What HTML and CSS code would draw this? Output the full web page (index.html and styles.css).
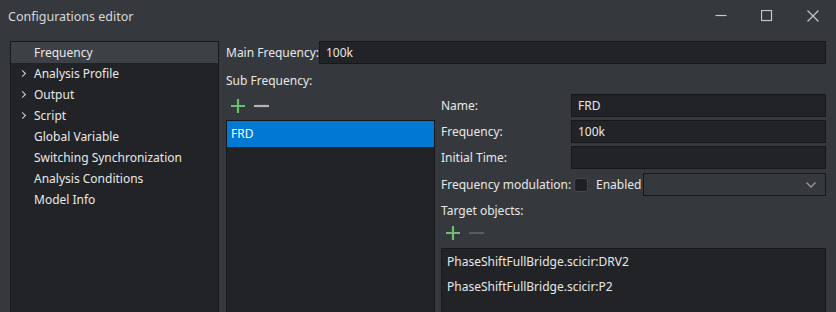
FILE: index.html
```html
<!DOCTYPE html>
<html lang="en">
<head>
  <meta charset="UTF-8" />
  <title>Configurations editor</title>
  <link rel="stylesheet" href="styles.css">
</head>
<body>
  <div class="window">
    <div class="titlebar">
      <span class="title">Configurations editor</span>
      <div class="win-buttons">
        <span class="win-btn"><svg width="12" height="12" viewBox="0 0 12 12"><path d="M0.5 5.5h11" stroke="#c8c8c8" stroke-width="1.2"/></svg></span>
        <span class="win-btn"><svg width="12" height="12" viewBox="0 0 12 12"><rect x="0.5" y="0.5" width="10" height="10" fill="none" stroke="#c8c8c8" stroke-width="1.2"/></svg></span>
        <span class="win-btn"><svg width="12" height="12" viewBox="0 0 12 12"><path d="M0.5 0.5l11 11M11.5 0.5l-11 11" stroke="#c8c8c8" stroke-width="1.2"/></svg></span>
      </div>
    </div>

    <div class="main">
      <ul class="tree">
        <li class="selected">Frequency</li>
        <li class="branch">Analysis Profile</li>
        <li class="branch">Output</li>
        <li class="branch">Script</li>
        <li>Global Variable</li>
        <li>Switching Synchronization</li>
        <li>Analysis Conditions</li>
        <li>Model Info</li>
      </ul>

      <div class="content">
        <div class="main-freq">
          <label>Main Frequency:</label>
          <div class="field">100k</div>
        </div>
        <div class="sub-label">Sub Frequency:</div>

        <div class="split">
          <div class="sub-col">
            <div class="tools">
              <span class="tool add"><svg width="16" height="16" viewBox="0 0 16 16"><path d="M8 1v14M1 8h14" stroke="#6cbf6a" stroke-width="2.2"/></svg></span>
              <span class="tool"><svg width="16" height="16" viewBox="0 0 16 16"><path d="M1 8h15" stroke="#b4b4b4" stroke-width="2.2"/></svg></span>
            </div>
            <div class="list sub-list">
              <div class="item active">FRD</div>
            </div>
          </div>

          <div class="form">
            <div class="grid">
              <label>Name:</label>
              <div class="field">FRD</div>
              <label>Frequency:</label>
              <div class="field">100k</div>
              <label>Initial Time:</label>
              <div class="field"></div>
            </div>
            <div class="mod-row">
              <label>Frequency modulation:</label>
              <span class="checkbox"></span>
              <span class="enabled">Enabled</span>
              <div class="field combo">
                <svg width="10" height="6" viewBox="0 0 10 6"><path d="M0.5 0.5l4.5 4.5 4.5-4.5" fill="none" stroke="#9a9a9a" stroke-width="1.3"/></svg>
              </div>
            </div>
            <div class="target-label">Target objects:</div>
            <div class="tools target-tools">
              <span class="tool add"><svg width="16" height="16" viewBox="0 0 16 16"><path d="M8 1v14M1 8h14" stroke="#6cbf6a" stroke-width="2.2"/></svg></span>
              <span class="tool"><svg width="16" height="16" viewBox="0 0 16 16"><path d="M1 8h15" stroke="#585b60" stroke-width="2.2"/></svg></span>
            </div>
            <div class="list target-list">
              <div class="item">PhaseShiftFullBridge.scicir:DRV2</div>
              <div class="item">PhaseShiftFullBridge.scicir:P2</div>
            </div>
          </div>
        </div>
      </div>
    </div>
  </div>
</body>
</html>
```

FILE: styles.css
```css
html, body { margin: 0; height: 100%; overflow: hidden; }
body {
  background: #35383d;
  color: #e8e8e8;
  font-family: "Noto Sans", sans-serif;
  font-size: 12px;
  white-space: nowrap;
}
.window { height: 312px; display: flex; flex-direction: column; }

.titlebar {
  height: 32px;
  display: flex;
  align-items: center;
  justify-content: space-between;
  padding-left: 8px;
  color: #d8d8d8;
  font-size: 12.5px;
}
.win-buttons { display: flex; }
.win-btn {
  width: 46px;
  height: 32px;
  display: flex;
  align-items: center;
  justify-content: center;
}
.win-btn svg { display: block; }

.main {
  flex: 1;
  display: flex;
  padding: 9px 10px 0 10px;
  gap: 7px;
  min-height: 0;
}

.tree {
  list-style: none;
  margin: 0;
  padding: 0;
  width: 207px;
  background: #222326;
  border: 1px solid #18191b;
  border-bottom: none;
}
.tree li {
  height: 21px;
  line-height: 21px;
  padding-left: 23px;
  position: relative;
}
.tree li.selected { background: #3d4045; }
.tree li.branch::before {
  content: "";
  position: absolute;
  left: 9px;
  top: 8px;
  width: 4px;
  height: 4px;
  border-right: 1.3px solid #d0d0d0;
  border-top: 1.3px solid #d0d0d0;
  transform: rotate(45deg);
}

.content { flex: 1; display: flex; flex-direction: column; min-width: 0; }

.main-freq { display: flex; align-items: center; height: 23px; }
.main-freq label { width: 93px; flex: none; }
.main-freq .field { flex: 1; }

.field {
  height: 21px;
  line-height: 21px;
  background: #222326;
  border: 1px solid #17181a;
  padding: 0 6px;
}

.sub-label { margin-top: 6px; height: 22px; line-height: 22px; }

.split { flex: 1; display: flex; gap: 6px; min-height: 0; }

.sub-col { width: 209px; display: flex; flex-direction: column; }

.tools { display: flex; gap: 7px; height: 28px; align-items: center; padding-left: 4px; }
.tool svg { display: block; }
.target-tools { height: 22px; }

.list {
  flex: 1;
  background: #222326;
  border: 1px solid #17181a;
  border-bottom: none;
}
.sub-list .item {
  height: 26px;
  line-height: 26px;
  padding-left: 4px;
}
.item.active { background: #0078d4; color: #fff; }

.form { flex: 1; display: flex; flex-direction: column; padding-top: 2px; }

.grid {
  display: grid;
  grid-template-columns: 130px 1fr;
  row-gap: 3px;
  align-items: center;
}

.mod-row { display: flex; align-items: center; margin-top: 4px; height: 23px; }
.mod-row label { width: 133px; flex: none; }
.checkbox {
  width: 12px;
  height: 12px;
  border: 1px solid #45484d;
  border-radius: 3px;
  background: #1f2023;
  margin-right: 8px;
}
.enabled { width: 47px; flex: none; }
.combo {
  flex: 1;
  display: flex;
  align-items: center;
  justify-content: flex-end;
  padding-right: 9px;
  background: #35383d;
}

.target-label { margin-top: 4px; height: 22px; line-height: 22px; }
.target-list { margin-top: 4px; padding-top: 0; }
.target-list .item { height: 25px; line-height: 25px; padding-left: 5px; }
```
